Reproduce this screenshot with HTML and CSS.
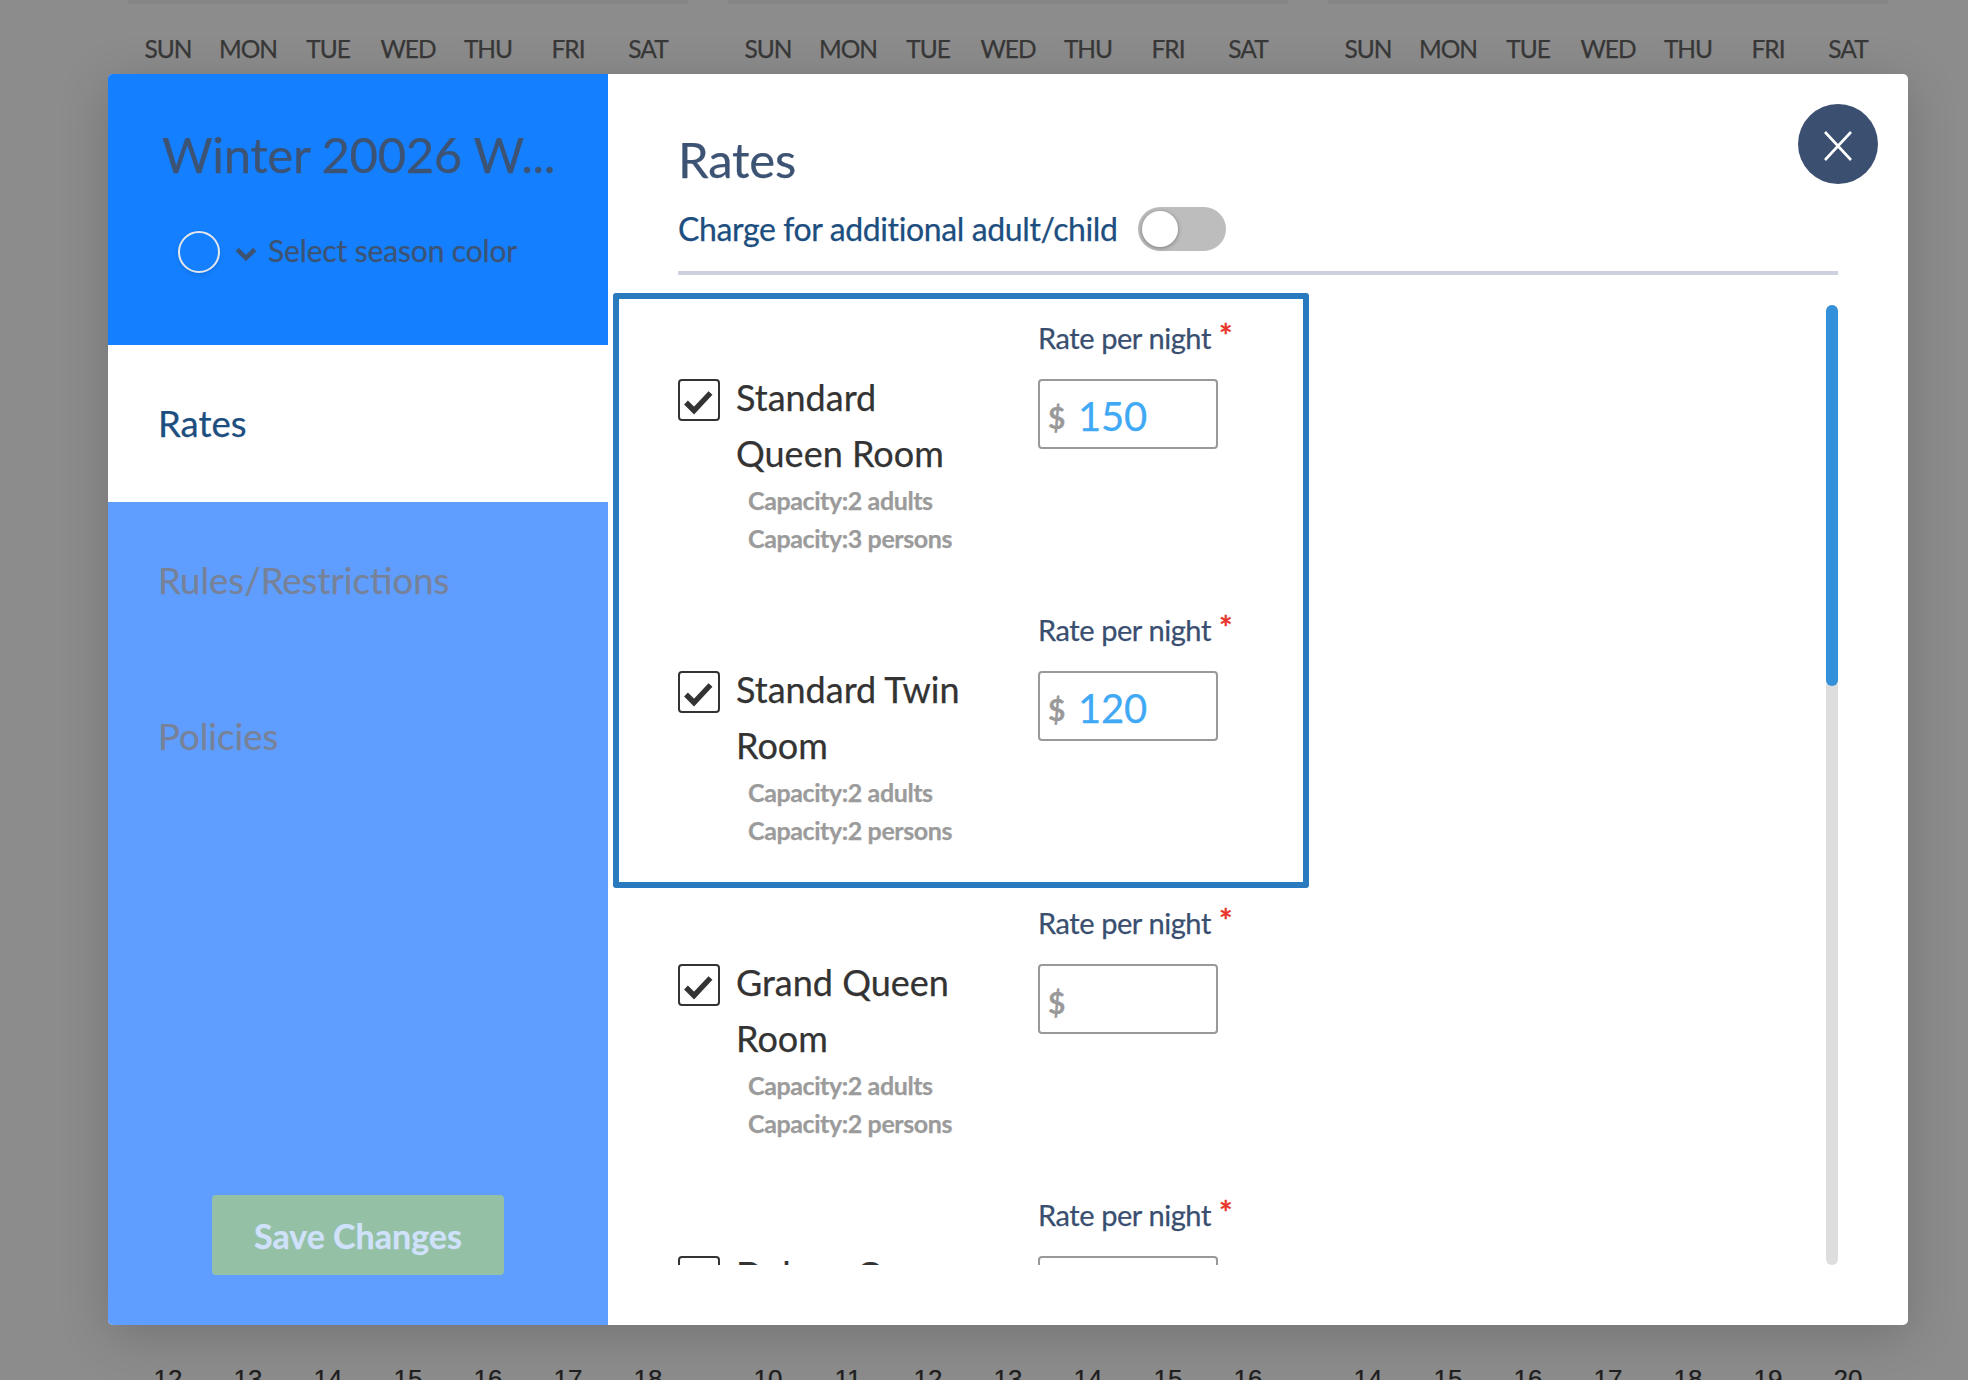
FILE: index.html
```html
<!DOCTYPE html>
<html lang="en">
<head>
<meta charset="utf-8">
<title>Rates</title>
<link rel="stylesheet" href="styles.css">
</head>
<body>
<div class="page">
  <div class="calendars">
    <section class="month">
      <div class="days"><span>SUN</span><span>MON</span><span>TUE</span><span>WED</span><span>THU</span><span>FRI</span><span>SAT</span></div>
      <div class="dates"><span>12</span><span>13</span><span>14</span><span>15</span><span>16</span><span>17</span><span>18</span></div>
    </section>
    <section class="month">
      <div class="days"><span>SUN</span><span>MON</span><span>TUE</span><span>WED</span><span>THU</span><span>FRI</span><span>SAT</span></div>
      <div class="dates"><span>10</span><span>11</span><span>12</span><span>13</span><span>14</span><span>15</span><span>16</span></div>
    </section>
    <section class="month">
      <div class="days"><span>SUN</span><span>MON</span><span>TUE</span><span>WED</span><span>THU</span><span>FRI</span><span>SAT</span></div>
      <div class="dates"><span>14</span><span>15</span><span>16</span><span>17</span><span>18</span><span>19</span><span>20</span></div>
    </section>
  </div>

  <div class="modal">
    <aside class="side">
      <header class="side-head">
        <h2 class="season-title">Winter 20026 W...</h2>
        <div class="color-select">
          <span class="color-dot"></span>
          <svg class="chevron" viewBox="0 0 22 14" width="22" height="14"><path d="M2.2 2.5l8.8 8.5 8.8-8.5" fill="none" stroke="#3d5374" stroke-width="4.6"/></svg>
          <span class="color-label">Select season color</span>
        </div>
      </header>
      <nav class="side-nav">
        <a class="nav-item nav-active">Rates</a>
        <a class="nav-item">Rules/Restrictions</a>
        <a class="nav-item">Policies</a>
      </nav>
      <div class="side-foot"><button class="save">Save Changes</button></div>
    </aside>

    <main class="content">
      <button class="close" aria-label="Close">
        <svg viewBox="0 0 30 30" width="30" height="30"><path d="M2 1l26 28M28 1L2 29" fill="none" stroke="#fff" stroke-width="2.6"/></svg>
      </button>
      <div class="content-head">
        <h1 class="content-title">Rates</h1>
        <div class="charge">
          <span class="charge-label">Charge for additional adult/child</span>
          <span class="toggle"><span class="knob"></span></span>
        </div>
      </div>
      <div class="rooms-wrap">
        <div class="rooms">
          <article class="room">
            <div class="room-info">
              <span class="check"><svg viewBox="2.5 2.5 37 37" width="37" height="37"><path d="M8.5 24l8 8L33 14.5" fill="none" stroke="#333" stroke-width="5.4"/></svg></span>
              <div class="room-text">
                <div class="room-name">Standard Queen Room</div>
                <div class="capacity">Capacity:2 adults</div>
                <div class="capacity">Capacity:3 persons</div>
              </div>
            </div>
            <div class="rate">
              <label class="rate-label">Rate per night <span class="req">*</span></label>
              <div class="rate-input"><span class="cur">$</span><span class="val">150</span></div>
            </div>
          </article>
          <article class="room">
            <div class="room-info">
              <span class="check"><svg viewBox="2.5 2.5 37 37" width="37" height="37"><path d="M8.5 24l8 8L33 14.5" fill="none" stroke="#333" stroke-width="5.4"/></svg></span>
              <div class="room-text">
                <div class="room-name">Standard Twin Room</div>
                <div class="capacity">Capacity:2 adults</div>
                <div class="capacity">Capacity:2 persons</div>
              </div>
            </div>
            <div class="rate">
              <label class="rate-label">Rate per night <span class="req">*</span></label>
              <div class="rate-input"><span class="cur">$</span><span class="val">120</span></div>
            </div>
          </article>
          <article class="room">
            <div class="room-info">
              <span class="check"><svg viewBox="2.5 2.5 37 37" width="37" height="37"><path d="M8.5 24l8 8L33 14.5" fill="none" stroke="#333" stroke-width="5.4"/></svg></span>
              <div class="room-text">
                <div class="room-name">Grand Queen Room</div>
                <div class="capacity">Capacity:2 adults</div>
                <div class="capacity">Capacity:2 persons</div>
              </div>
            </div>
            <div class="rate">
              <label class="rate-label">Rate per night <span class="req">*</span></label>
              <div class="rate-input"><span class="cur">$</span><span class="val"></span></div>
            </div>
          </article>
          <article class="room">
            <div class="room-info">
              <span class="check"></span>
              <div class="room-text">
                <div class="room-name">Deluxe Queen Room</div>
              </div>
            </div>
            <div class="rate">
              <label class="rate-label">Rate per night <span class="req">*</span></label>
              <div class="rate-input"><span class="cur">$</span><span class="val"></span></div>
            </div>
          </article>
        </div>
        <div class="highlight"></div>
        <div class="scrollbar"><div class="thumb"></div></div>
      </div>
    </main>
  </div>
</div>
</body>
</html>
```
FILE: styles.css
```css
* { box-sizing: border-box; }
html, body { margin: 0; height: 100%; }
body { font-family: "Lato", "Liberation Sans", sans-serif; background: #8c8c8c; overflow: hidden; -webkit-text-stroke: 0.25px currentColor; }

.page { position: relative; width: 1968px; height: 1380px; overflow: hidden; background: #8c8c8c; }

.calendars { display: flex; gap: 40px; padding-left: 128px; }
.month { width: 560px; height: 1380px; display: flex; flex-direction: column; border-top: 4px solid #868686; }
.days, .dates { display: grid; grid-template-columns: repeat(7, 80px); text-align: center; }
.days { margin-top: 27px; font-size: 24.5px; line-height: 36px; color: #383838; letter-spacing: -1px; }
.dates { margin-top: auto; margin-bottom: -14px; font-family: "Liberation Sans", Arial, sans-serif; font-size: 26px; line-height: 30px; color: #1f1f1f; }

.modal { position: absolute; left: 108px; top: 74px; width: 1800px; height: 1251px; display: flex; background: #fff; border-radius: 5px; overflow: hidden; }
.page::after { content: ""; position: absolute; left: 108px; top: 74px; width: 1800px; height: 1251px; border-radius: 5px; box-shadow: 0 10px 50px rgba(0,0,0,.18); pointer-events: none; }

.side { width: 500px; flex: none; display: flex; flex-direction: column; background: #5f9eff; }
.side-head { height: 271px; background: #1480ff; padding: 52px 0 0 54px; }
.season-title { margin: 0; font-size: 49px; line-height: 56px; font-weight: 400; color: #3d5374; white-space: nowrap; letter-spacing: -0.35px; }
.color-select { display: flex; align-items: center; margin: 49px 0 0 16px; }
.color-dot { width: 42px; height: 42px; border-radius: 50%; border: 2.5px solid #e4e6ea; box-shadow: 0 2px 5px rgba(0,0,0,.12); }
.chevron { margin: 3px 11px 0 15px; }
.color-label { font-size: 30px; line-height: 38px; color: #3d5374; position: relative; top: -2px; letter-spacing: -0.15px; }

.side-nav { display: flex; flex-direction: column; }
.nav-item { height: 156.5px; display: flex; align-items: center; padding-left: 50px; font-size: 36.5px; color: #778298; }
.nav-active { background: #fff; color: #1c4e80; }

.side-foot { margin-top: auto; padding-bottom: 50px; display: flex; justify-content: center; }
.save { width: 292px; height: 80px; border: 0; border-radius: 4px; background: #94c0a6; color: #d0e2fb; font-family: inherit; font-size: 34px; font-weight: 700; }

.content { position: relative; flex: 1; display: flex; flex-direction: column; min-width: 0; }
.close { position: absolute; right: 30px; top: 30px; width: 80px; height: 80px; padding: 0; border: 0; border-radius: 50%; background: #3b5070; display: flex; align-items: center; justify-content: center; z-index: 2; }
.close svg { margin-top: 3px; }

.content-head { margin: 0 70px; height: 201px; border-bottom: 4px solid #cdd1dd; padding-top: 56px; }
.content-title { margin: 0; font-size: 49px; line-height: 58px; font-weight: 400; color: #3d5374; letter-spacing: -0.2px; }
.charge { display: flex; align-items: center; margin-top: 19px; }
.charge-label { font-size: 32px; line-height: 44px; color: #1c4e80; letter-spacing: -0.38px; }
.toggle { position: relative; width: 88px; height: 44px; margin-left: 20px; border-radius: 22px; background: #bdbdbd; }
.knob { position: absolute; left: 4px; top: 4px; width: 36px; height: 36px; border-radius: 50%; background: #fff; box-shadow: 0 1px 4px rgba(0,0,0,.35); }

.rooms-wrap { position: relative; margin-top: 18px; height: 972px; overflow: hidden; }
.rooms { padding: 6px 0 0 70px; }
.room { display: grid; grid-template-columns: 360px 1fr; height: 292px; }
.room:nth-child(3) { margin-top: 1px; }
.room-info { display: flex; align-items: flex-start; gap: 16px; padding-top: 70px; }
.check { flex: none; width: 42px; height: 42px; margin-top: 10px; border: 2.5px solid #333; border-radius: 4px; }
.check svg { display: block; }
.room-text { width: 250px; }
.room-name { font-size: 36px; line-height: 56px; color: #333; }
.capacity { padding-left: 12px; font-size: 25px; line-height: 38px; font-weight: 700; color: #9b9b9b; letter-spacing: -0.4px; white-space: nowrap; }
.capacity:first-of-type { margin-top: 0; }
.rate { padding-top: 19px; }
.rate-label { display: block; font-size: 29px; line-height: 40px; color: #3a4f70; letter-spacing: -0.42px; }
.req { color: #e8352b; font-size: 32px; font-weight: 700; line-height: 0; letter-spacing: 0; position: relative; top: -1px; left: 1px; }
.rate-input { display: flex; align-items: center; width: 180px; height: 70px; margin-top: 21px; padding-left: 8px; border: 2px solid #999; border-radius: 4px; }
.cur { font-size: 30px; font-weight: 700; color: #999; width: 30px; position: relative; top: 3px; }
.val { font-size: 40px; color: #3fa9f5; position: relative; top: 2px; letter-spacing: -0.2px; }

.highlight { position: absolute; left: 5px; top: 0; width: 696px; height: 595px; border: 6px solid #2a7abf; border-radius: 3px; pointer-events: none; }
.scrollbar { position: absolute; right: 70px; top: 12px; width: 12px; height: 960px; border-radius: 6px; background: #ddd; }
.thumb { height: 381px; border-radius: 6px; background: #3490d8; }
```
